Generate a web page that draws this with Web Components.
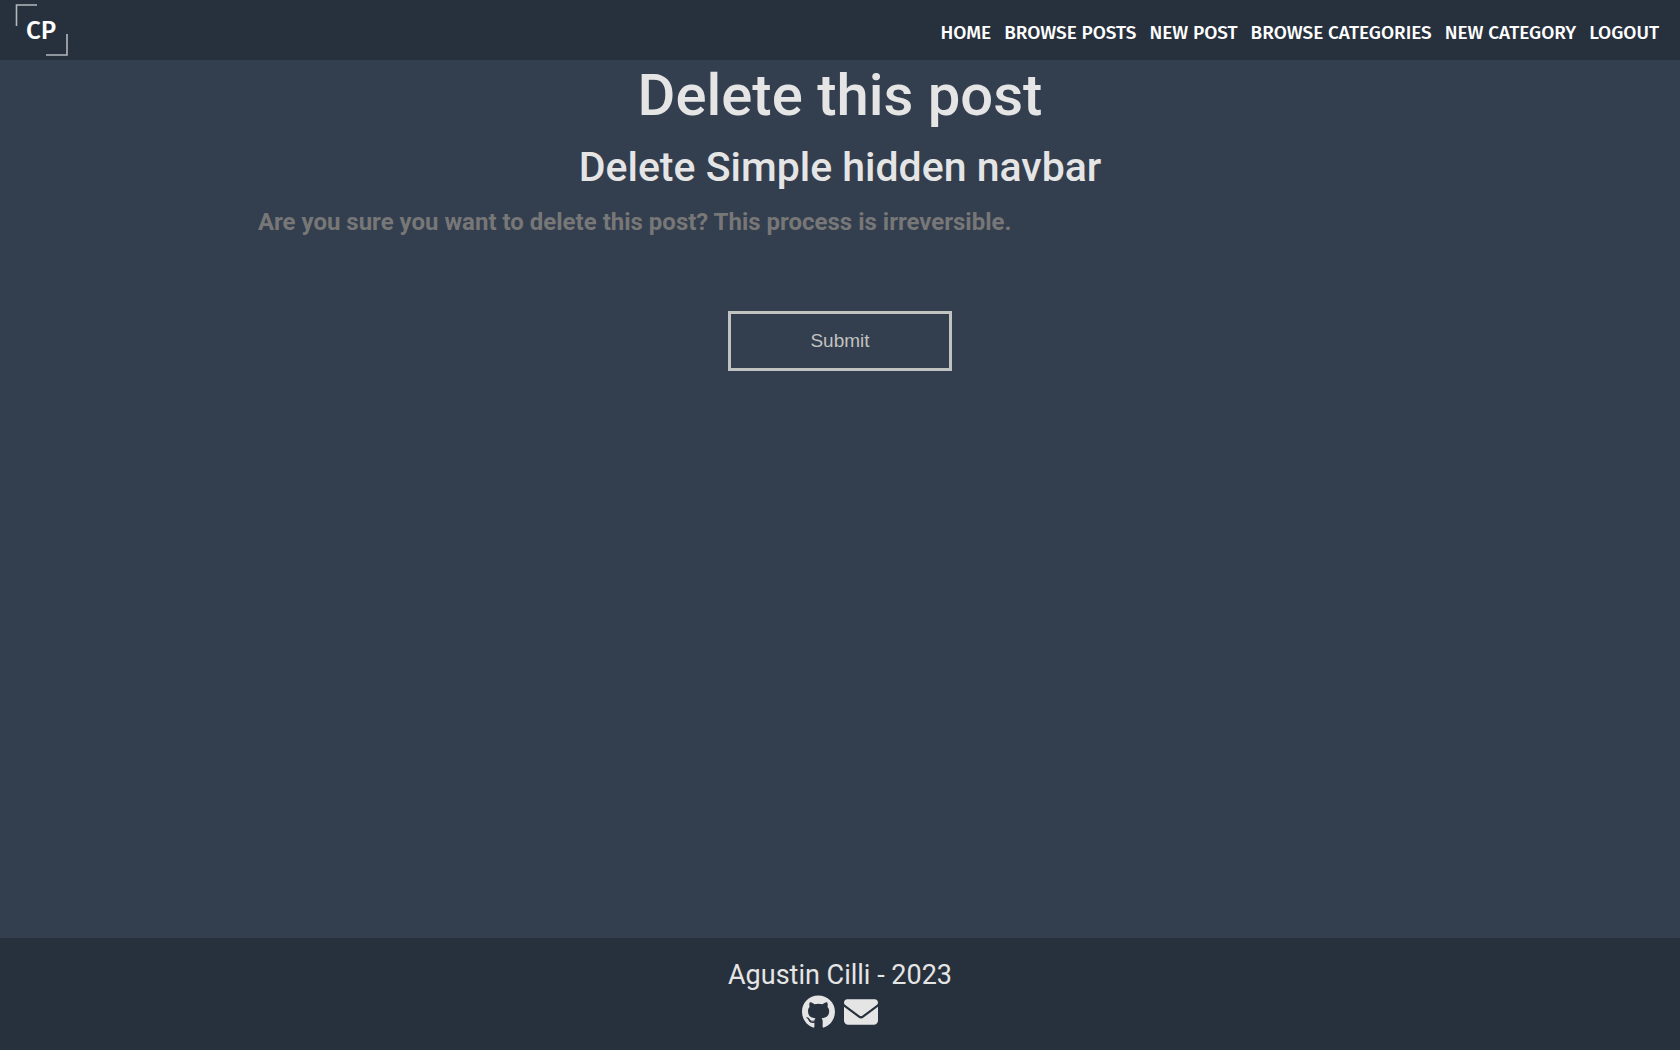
<!DOCTYPE html>
<html lang="en">
<head>
<meta charset="utf-8">
<title>Delete this post</title>
<style>
  html, body { margin: 0; }
  body { background: #333e4e; color: #e5e5e5; font-family: Roboto, sans-serif; }
</style>
</head>
<body>
<blog-page>
  <site-header slot="header">
    <nav-link href="#home">HOME</nav-link>
    <nav-link href="#posts">BROWSE POSTS</nav-link>
    <nav-link href="#new-post">NEW POST</nav-link>
    <nav-link href="#categories">BROWSE CATEGORIES</nav-link>
    <nav-link href="#new-category">NEW CATEGORY</nav-link>
    <nav-link href="#logout">LOGOUT</nav-link>
  </site-header>
  <delete-form>
    <span slot="title">Delete this post</span>
    <span slot="subject">Delete Simple hidden navbar</span>
    <span slot="warning">Are you sure you want to delete this post? This process is irreversible.</span>
  </delete-form>
  <site-footer slot="footer">Agustin Cilli - 2023</site-footer>
</blog-page>
<script>
const define = (name, html) => customElements.define(name, class extends HTMLElement {
  constructor() {
    super();
    this.attachShadow({ mode: 'open' }).innerHTML = html;
  }
});

define('blog-page', `
  <style>
    :host { display: flex; flex-direction: column; min-height: 100vh; }
    main { flex: 1; }
  </style>
  <slot name="header"></slot>
  <main><slot></slot></main>
  <slot name="footer"></slot>`);

define('site-logo', `
  <style>
    :host { display: block; }
    a { display: block; }
    svg { display: block; }
    text { font: 500 26px "Fira Sans", Roboto, sans-serif; fill: #fff; }
  </style>
  <a href="#home" aria-label="Home">
    <svg width="54" height="54" viewBox="0 0 54 54">
      <path d="M22 2H1.500V23M31 52H52V31" fill="none" stroke="#b4b8bd" stroke-width="1.600"/>
      <text x="26" y="36" text-anchor="middle">CP</text>
    </svg>
  </a>`);

define('site-header', `
  <style>
    :host { display: block; background: #27313d; }
    header { display: flex; align-items: center; justify-content: space-between; height: 60px; padding: 0 21px 0 15px; }
    nav { display: flex; gap: 13px; padding-top: 5px; }
  </style>
  <header><site-logo></site-logo><nav><slot></slot></nav></header>`);

customElements.define('nav-link', class extends HTMLElement {
  constructor() {
    super();
    this.attachShadow({ mode: 'open' }).innerHTML = `
      <style>
        :host { display: block; }
        a { color: #fff; text-decoration: none; font: 500 19px/24px "Fira Sans", Roboto, sans-serif; white-space: nowrap; }
      </style>
      <a><slot></slot></a>`;
  }
  connectedCallback() {
    this.shadowRoot.querySelector('a').href = this.getAttribute('href');
  }
});

define('delete-form', `
  <style>
    :host { display: block; }
    h1, h2 { margin: 0; text-align: center; font-weight: 500; }
    h1 { font-size: 58px; line-height: 70px; }
    h2 { font-size: 41px; line-height: 50px; margin-top: 12px; }
    form { display: flex; flex-direction: column; width: 69.3%; margin: 0 auto; }
    p { margin: 16px 0 0; color: #777; font-size: 24px; line-height: 28px; font-weight: 700; }
    button { align-self: center; width: 224px; height: 60px; margin-top: 75px; padding: 0;
      background: transparent; border: 3px solid #c0c3c0; color: #c0c3c0; font: 400 19px "Liberation Sans", sans-serif; }
  </style>
  <h1><slot name="title"></slot></h1>
  <h2><slot name="subject"></slot></h2>
  <form>
    <p><slot name="warning"></slot></p>
    <button type="submit">Submit</button>
  </form>`);

define('site-footer', `
  <style>
    :host { display: block; background: #27313d; }
    footer { display: flex; flex-direction: column; align-items: center; gap: 3px; padding: 21px 0; font-size: 27px; line-height: 33px; }
    div { display: flex; gap: 9px; }
    a { display: block; color: inherit; }
    svg { display: block; height: 34px; fill: currentColor; }
  </style>
  <footer>
    <span><slot></slot></span>
    <div>
      <a href="#github" aria-label="GitHub"><svg viewBox="0 0 496 512"><path d="M165.9 397.4c0 2-2.3 3.6-5.2 3.6-3.3.3-5.6-1.3-5.6-3.6 0-2 2.3-3.6 5.2-3.6 3-.3 5.6 1.3 5.6 3.6zm-31.1-4.5c-.7 2 1.3 4.3 4.3 4.9 2.6 1 5.6 0 6.2-2s-1.3-4.3-4.3-5.2c-2.6-.7-5.5.3-6.2 2.3zm44.2-1.7c-2.9.7-4.9 2.6-4.6 4.9.3 2 2.9 3.3 5.9 2.6 2.9-.7 4.9-2.6 4.6-4.6-.3-1.9-3-3.2-5.9-2.9zM244.8 8C106.1 8 0 113.3 0 252c0 110.9 69.8 205.8 169.5 239.2 12.8 2.3 17.3-5.6 17.3-12.1 0-6.2-.3-40.4-.3-61.4 0 0-70 15-84.7-29.8 0 0-11.4-29.1-27.8-36.6 0 0-22.9-15.7 1.6-15.4 0 0 24.9 2 38.6 25.8 21.9 38.6 58.6 27.5 72.9 20.9 2.3-16 8.8-27.1 16-33.7-55.9-6.2-112.3-14.3-112.3-110.5 0-27.5 7.6-41.3 23.6-58.9-2.6-6.5-11.1-33.3 2.6-67.9 20.9-6.5 69 27 69 27 20-5.6 41.5-8.5 62.8-8.5s42.8 2.9 62.8 8.5c0 0 48.1-33.6 69-27 13.7 34.7 5.2 61.4 2.6 67.9 16 17.7 25.8 31.5 25.8 58.9 0 96.5-58.9 104.2-114.8 110.5 9.2 7.9 17 22.9 17 46.4 0 33.7-.3 75.4-.3 83.6 0 6.5 4.6 14.4 17.3 12.1C428.2 457.8 496 362.9 496 252 496 113.3 383.5 8 244.8 8z"/></svg></a>
      <a href="#mail" aria-label="Email"><svg viewBox="0 0 512 512"><path d="M48 64C21.500 64 0 85.500 0 112c0 15.100 7.100 29.300 19.200 38.400L236.800 313.600c11.400 8.500 27 8.500 38.400 0L492.800 150.400c12.100-9.100 19.200-23.300 19.200-38.400c0-26.500-21.500-48-48-48H48zM0 176V384c0 35.300 28.700 64 64 64H448c35.300 0 64-28.700 64-64V176L294.400 339.200c-22.800 17.100-54 17.100-76.800 0L0 176z"/></svg></a>
    </div>
  </footer>`);
</script>
</body>
</html>
